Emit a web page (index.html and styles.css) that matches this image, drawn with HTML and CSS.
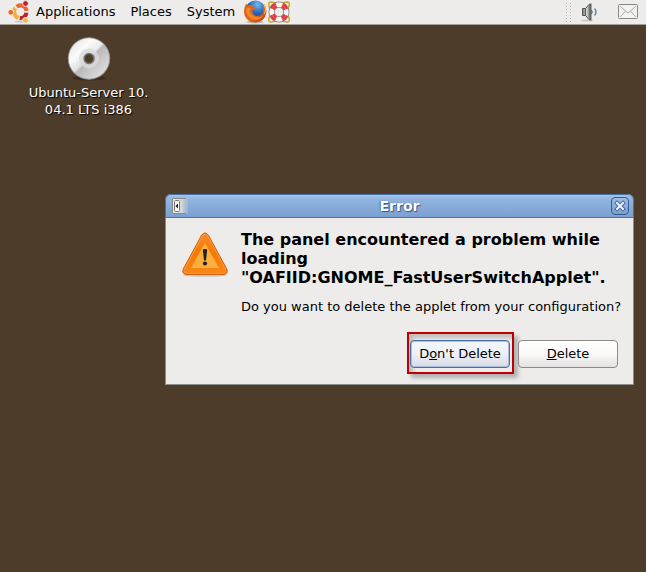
FILE: index.html
```html
<!DOCTYPE html>
<html lang="en">
<head>
<meta charset="utf-8">
<title>Desktop</title>
<link rel="stylesheet" href="styles.css">
</head>
<body>
<header class="panel">
  <nav class="menus">
    <button class="menu" type="button">
      <svg class="icon" width="24" height="24" viewBox="0 0 24 24" aria-hidden="true">
        <ellipse cx="14" cy="21.500" rx="8" ry="1.200" fill="#c9c8c6"/>
        <g fill="none" stroke-width="4">
          <path d="M8 7.500A6 6 0 0 0 11 17.800" stroke="#eeb136"/>
          <path d="M8.700 6.800A6 6 0 0 1 18.500 11" stroke="#e9692c"/>
          <path d="M18.500 12.500A6 6 0 0 1 11.700 18" stroke="#bd1f2b"/>
        </g>
        <g stroke="#edeceb" stroke-width="1">
          <circle cx="2.800" cy="12.300" r="2.900" fill="#e9692c"/>
          <circle cx="17.500" cy="3.500" r="2.900" fill="#bd1f2b"/>
          <circle cx="17.500" cy="20.400" r="2.900" fill="#eebf3c"/>
        </g>
        <path d="M6.500 6l2.500 3.500M20.500 12h-4M10 20l1.800-4" stroke="#edeceb"/>
      </svg>
      <span>Applications</span>
    </button>
    <button class="menu" type="button">Places</button>
    <button class="menu" type="button">System</button>
  </nav>
  <button class="launcher" type="button" aria-label="Firefox">
    <svg class="icon" width="24" height="24" viewBox="0 0 24 24" aria-hidden="true">
      <defs>
        <radialGradient id="globe" cx=".6" cy=".2" r=".8"><stop offset="0" stop-color="#75b9ef"/><stop offset=".5" stop-color="#2b68b5"/><stop offset="1" stop-color="#172f69"/></radialGradient>
        <linearGradient id="fox" x2="1" y2="1"><stop offset="0" stop-color="#d9651c"/><stop offset=".55" stop-color="#e8661c"/><stop offset="1" stop-color="#b63a14"/></linearGradient>
      </defs>
      <ellipse cx="12" cy="22" rx="9" ry="1.500" fill="#bdbbb7"/>
      <circle cx="12.500" cy="10.800" r="10.300" fill="url(#globe)"/>
      <path d="M3.200 3.500L4.500 5.700Q6 4.700 8.300 5L11 4.500Q9.500 6 9.700 7.400L12.400 8.200Q12 10 9 10.600Q9.400 14.500 13.200 16Q17.500 16.500 19.900 12.500Q20.700 9 20 5.500L21.200 7L21 3.500Q24 8 23.300 13Q21.700 21.500 13 22.600Q4.500 22.600 1.600 15.500Q-.2 9 3.200 3.500Z" fill="url(#fox)"/>
      <path d="M3.300 9Q3 17 10.500 19.500Q17 20.500 20.500 15.500Q17.500 18 13 17Q7.500 16 6.500 11L7.500 8Q5 7 3.300 9Z" fill="#ee8b25"/>
      <path d="M21 4Q23.700 9 21.700 14" fill="none" stroke="#f6c844"/>
    </svg>
  </button>
  <button class="launcher" type="button" aria-label="Help">
    <svg class="icon" width="24" height="24" viewBox="0 0 24 24" aria-hidden="true">
      <g fill="none" stroke="#cba72b" stroke-width="1.500">
        <path d="M3 9L1.700 5Q1.200 2 4 2L9 3M15 3l5-1q2.800 0 2.300 3L21 9M3 15l-1.300 4q-.5 3 2.300 3L9 21M15 21l5 1q2.800 0 2.300-3L21 15"/>
      </g>
      <circle cx="12" cy="12" r="7.400" fill="none" stroke="#85827c" stroke-width="6.200"/>
      <circle cx="12" cy="12" r="7.400" fill="none" stroke="#f8f6f4" stroke-width="4.600"/>
      <circle cx="12" cy="12" r="7.400" fill="none" stroke="#e6323a" stroke-width="5" stroke-dasharray="5.600 6.024" stroke-dashoffset="-3"/>
      <circle cx="12" cy="12" r="7.600" fill="none" stroke="#fff" stroke-opacity=".25"/>
    </svg>
  </button>
  <div class="tray">
    <svg class="grip" width="6" height="20" viewBox="0 0 6 20" aria-hidden="true">
      <path d="M1.500 1v19M5.500 1v19" stroke="#fff" stroke-dasharray="1 2"/>
      <path d="M.5 1v19M4.500 1v19" stroke="#b5b3b0" stroke-dasharray="1 2"/>
    </svg>
    <button class="tray-item" type="button" aria-label="Volume">
      <svg class="icon" width="18" height="20" viewBox="0 0 18 20" aria-hidden="true">
        <defs><linearGradient id="speaker"><stop offset="0" stop-color="#747773"/><stop offset=".5" stop-color="#d6d7d4"/><stop offset="1" stop-color="#6a6d69"/></linearGradient></defs>
        <ellipse cx="7" cy="18.500" rx="6" ry="1" fill="#cccac7"/>
        <path d="M2.500 6.500h3L9 2.500h1.500v15H9l-3.500-4h-3Z" fill="url(#speaker)" stroke="#555753"/>
        <path d="M5.500 6.500v7" stroke="#555753"/>
        <path d="M10.500 1.500v17" stroke="#62655f" stroke-width="2"/>
        <path d="M11.500 8q1.500 2 0 4" fill="#888a85" stroke="#555753"/>
        <path d="M14.500 6.500q3 3.500 0 7" fill="none" stroke="#5f88bc" stroke-width="1.500"/>
      </svg>
    </button>
    <button class="tray-item" type="button" aria-label="Messages">
      <svg class="icon" width="20" height="16" viewBox="0 0 20 16" aria-hidden="true">
        <rect x=".5" y=".5" width="19" height="14" rx="1" fill="#f3f3f1" stroke="#868882"/>
        <path d="M2 2l8 7L18 2M2 13l5.500-5.800M18 13l-5.500-5.800" fill="none" stroke="#a9aba5"/>
      </svg>
    </button>
  </div>
</header>

<main class="desktop">
  <figure class="volume">
    <svg class="icon" width="44" height="44" viewBox="0 0 44 44" aria-hidden="true">
      <defs>
        <linearGradient id="disc" x2="1" y2="1"><stop offset="0" stop-color="#c5c5c5"/><stop offset=".3" stop-color="#f8f8f8"/><stop offset=".48" stop-color="#e1e1e1"/><stop offset=".52" stop-color="#b9b9b9"/><stop offset="1" stop-color="#ededed"/></linearGradient>
      </defs>
      <ellipse cx="22" cy="41" rx="17" ry="2.500" fill="#3b2e20"/>
      <circle cx="22" cy="21.500" r="20.700" fill="url(#disc)" stroke="#999"/>
      <path d="M2.700 27A20 20 0 0 1 36 7L22 21.500Z" fill="#fff" fill-opacity=".35"/>
      <circle cx="22" cy="21.500" r="8" fill="none" stroke="#d9d9d9" stroke-width="4" stroke-opacity=".8"/>
      <circle cx="22" cy="21.500" r="5" fill="#4c3c29" stroke="#777" stroke-width="1.500"/>
    </svg>
    <figcaption class="volume-name">Ubuntu-Server 10.<br>04.1 LTS i386</figcaption>
  </figure>

  <section class="dialog" role="alertdialog" aria-labelledby="title" aria-describedby="message">
    <header class="titlebar">
      <svg class="icon" width="16" height="16" viewBox="0 0 16 16" aria-hidden="true">
        <defs><linearGradient id="drawer"><stop offset="0" stop-color="#eee"/><stop offset=".6" stop-color="#d3d7cf"/><stop offset="1" stop-color="#b9c8d7" stop-opacity=".3"/></linearGradient></defs>
        <path d="M0 0h16v16H0Z" fill="url(#drawer)"/>
        <path d="M14 .5H.5v15H14" fill="none" stroke="#85898a"/>
        <rect x="2.500" y="2.500" width="5" height="11" rx="1" fill="#f6f6f5" stroke="#777a76"/>
        <path d="M6 5.500v5L3.500 8Z" fill="#222"/>
      </svg>
      <h1 class="title" id="title">Error</h1>
      <button class="close" type="button" aria-label="Close">
        <svg class="icon" width="12" height="12" viewBox="0 0 12 12" aria-hidden="true">
          <path d="M3 3l6 6M9 3l-6 6" stroke="#416ba3" stroke-width="4" stroke-linecap="square"/>
          <path d="M3 3l6 6M9 3l-6 6" stroke="#f0f5fc" stroke-width="2" stroke-linecap="square"/>
        </svg>
      </button>
    </header>
    <div class="content">
      <svg class="warning" width="48" height="48" viewBox="0 0 48 48" aria-hidden="true">
        <defs><linearGradient id="warn" x2="0" y2="1"><stop offset="0" stop-color="#f78b28"/><stop offset=".5" stop-color="#f57900"/><stop offset="1" stop-color="#f98718"/></linearGradient></defs>
        <ellipse cx="24" cy="45" rx="22" ry="2" fill="#cfcdca"/>
        <path d="M20.500 5.300Q24 .500 27.500 5.300L45.700 39Q47.500 43.500 43 44.500H5Q.5 43.500 2.300 39Z" fill="url(#warn)" stroke="#cf5c0b"/>
        <path d="M21.500 5.500Q24 2.500 26.500 5.500L44.700 39.500Q46 42.500 42.700 43.500H5.300Q2 42.500 3.300 39.500Z" fill="none" stroke="#f99a45"/>
        <path d="M24 13L38 38H10Z" fill="#fcaf3e"/>
        <path d="M21.800 19.500q2.200-1 4.400 0l-1.200 11h-2Z" fill="#222"/>
        <circle cx="24" cy="33.500" r="2.100" fill="#222"/>
      </svg>
      <div class="text">
        <h2 class="headline">The panel encountered a problem while loading "OAFIID:GNOME_FastUserSwitchApplet".</h2>
        <p class="message" id="message">Do you want to delete the applet from your configuration?</p>
      </div>
    </div>
    <footer class="actions">
      <span class="callout"><button class="button button-focused" type="button">D<u>o</u>n't Delete</button></span>
      <button class="button" type="button"><u>D</u>elete</button>
    </footer>
  </section>
</main>
</body>
</html>
```
FILE: styles.css
```css
* {
  box-sizing: border-box;
}

body {
  margin: 0;
  min-height: 100vh;
  display: flex;
  flex-direction: column;
  background: #4c3c29;
  color: #000;
  font: 13px/18px "DejaVu Sans", sans-serif;
}

button {
  margin: 0;
  padding: 0;
  border: 0;
  background: none;
  color: inherit;
  font: inherit;
}

h1,
h2,
p,
figure {
  margin: 0;
}

.icon {
  display: block;
  flex: none;
}

.panel {
  display: flex;
  align-items: center;
  height: 25px;
  padding-left: 8px;
  background: #edeceb;
  border-bottom: 1px solid #a4a29e;
}

.menus {
  display: flex;
  gap: 15px;
  margin-right: 8px;
}

.menu {
  display: flex;
  align-items: center;
  gap: 4px;
}

.tray {
  display: flex;
  align-items: center;
  margin-left: auto;
  padding-right: 8px;
}

.grip {
  margin-right: 8px;
}

.tray-item + .tray-item {
  margin-left: 20px;
}

.desktop {
  position: relative;
  flex: 1;
  padding: 12px 24px;
}

.volume {
  display: flex;
  flex-direction: column;
  align-items: center;
  width: 129px;
}

.volume-name {
  margin-top: 3px;
  line-height: 17px;
  text-align: center;
  white-space: nowrap;
  color: #fff;
  text-shadow: 1px 1px 1px #000;
}

.dialog {
  position: absolute;
  top: 169px;
  left: 165px;
  right: 12px;
  border: 1px solid #8f8d89;
  border-top: 0;
  border-radius: 6px 6px 0 0;
  background: #edeceb;
}

.titlebar {
  display: flex;
  align-items: center;
  height: 24px;
  margin: 0 -1px;
  padding: 0 4px 0 6px;
  border: 1px solid #4872a8;
  border-radius: 6px 6px 0 0;
  background: linear-gradient(#a5c3ea, #91b3df 20%, #7ba0d0);
}

.title {
  flex: 1;
  text-align: center;
  font-size: 14px;
  line-height: 18px;
  color: #fff;
  text-shadow: 1px 1px 1px #33598e, -1px 0 1px #4c76ae;
}

.close {
  display: grid;
  place-items: center;
  width: 18px;
  height: 18px;
  border: 1px solid #35598d;
  border-radius: 4px;
  background: linear-gradient(#9cbce5, #7ba0d0);
  box-shadow: 0 0 1px #c2d7f2;
}

.content {
  display: flex;
  gap: 12px;
  padding: 12px 14px 0 15px;
}

.warning {
  flex: none;
}

.headline {
  font-size: 16px;
  line-height: 19px;
}

.message {
  margin-top: 11px;
  white-space: nowrap;
}

.actions {
  display: flex;
  justify-content: flex-end;
  align-items: flex-end;
  gap: 4px;
  padding: 16px 15px 10px;
}

.callout {
  margin-bottom: -6px;
  padding: 6px 2px 4px 1px;
  border: 2px solid #bf0000;
  box-shadow: 4px 4px 4px rgba(0, 0, 0, .25), inset 4px 4px 4px rgba(0, 0, 0, .2);
}

.actions {
  padding-bottom: 16px;
}

.button {
  width: 100px;
  height: 28px;
  border: 1px solid #8d8b87;
  border-radius: 4px;
  background: linear-gradient(#fff, #f9f9f8 50%, #e4e2e0);
}

.callout .button {
  display: block;
}

.button-focused {
  border-color: #4872a8;
  background: linear-gradient(#f3f6fb, #edf0f5 50%, #d8dbe2);
  box-shadow: inset 0 0 0 1px #a7bddb;
}
```
